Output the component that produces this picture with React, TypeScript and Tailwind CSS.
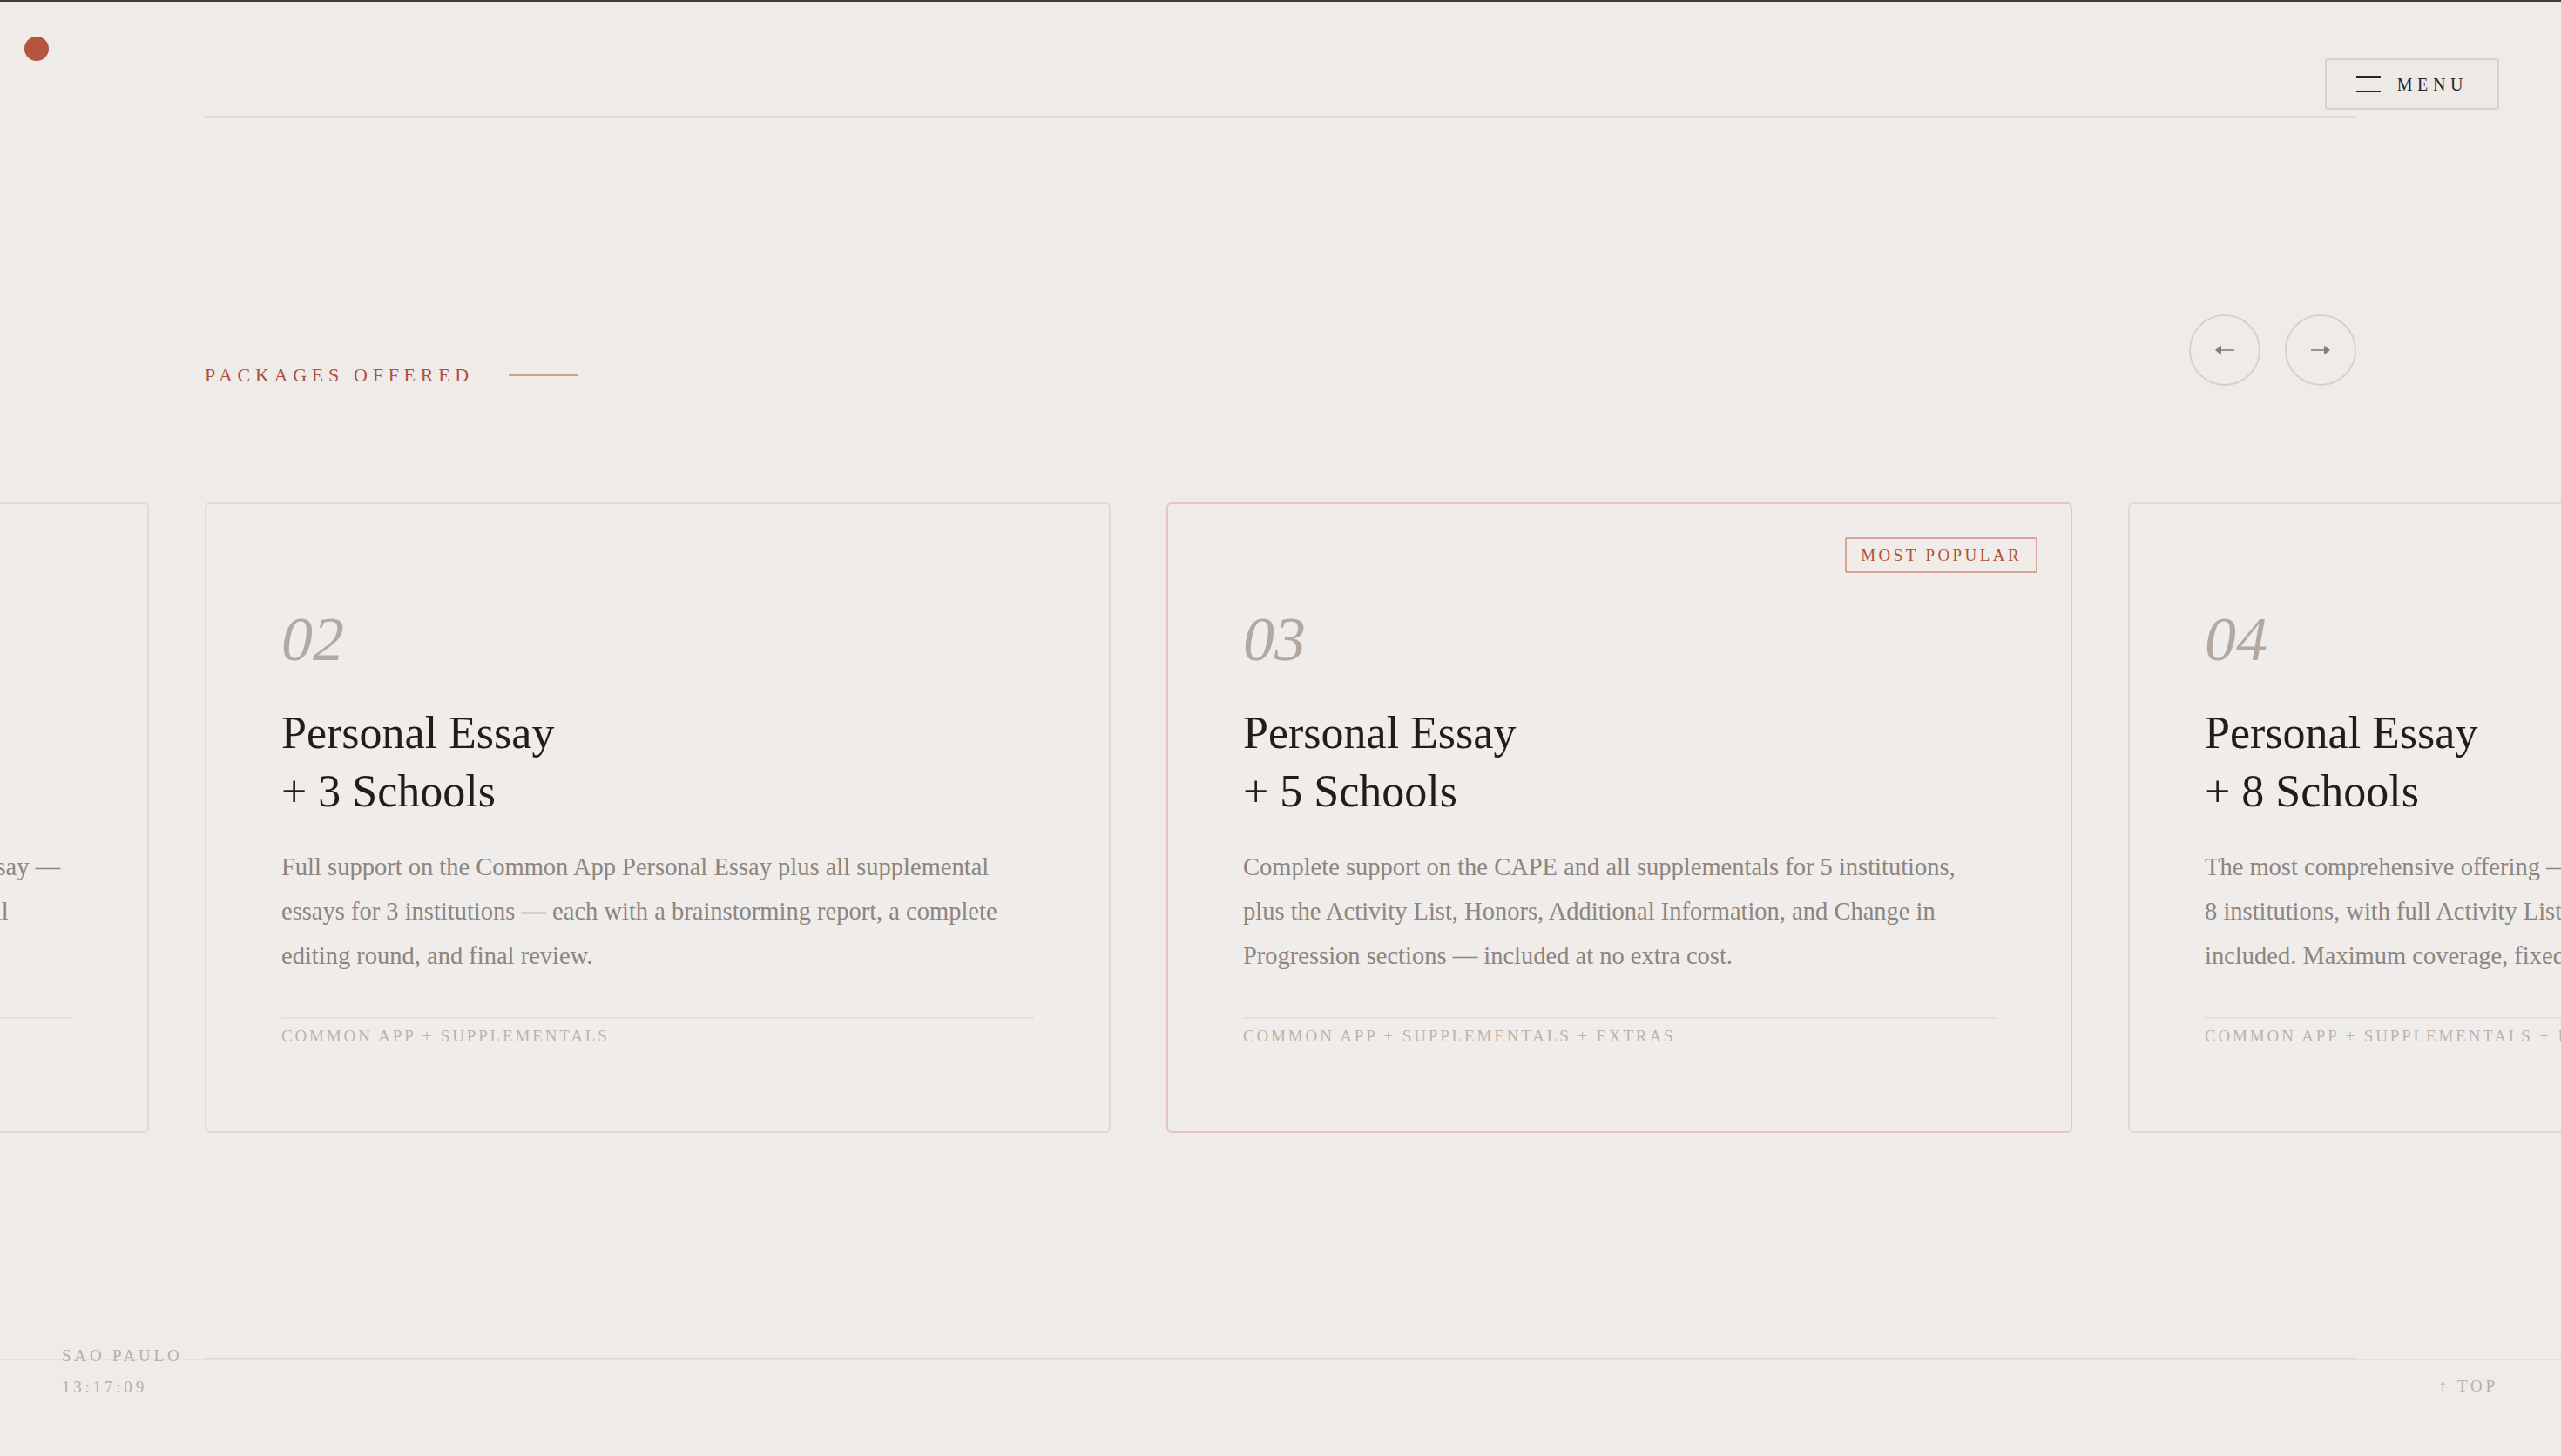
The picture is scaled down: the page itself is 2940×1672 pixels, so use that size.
import React from 'react'

interface Pkg {
  num: string
  title: string
  lines: string[]
  tags: string
  featured?: boolean
}

const packages: Pkg[] = [
  {
    num: '01',
    title: 'Personal Essay|Only',
    lines: [
      'Focused one-on-one guidance through each stage of the Personal Essay —',
      'brainstorming, a complete editing round, and a full final review of all',
      'drafts.',
    ],
    tags: 'COMMON APP',
  },
  {
    num: '02',
    title: 'Personal Essay|+ 3 Schools',
    lines: [
      'Full support on the Common App Personal Essay plus all supplemental',
      'essays for 3 institutions — each with a brainstorming report, a complete',
      'editing round, and final review.',
    ],
    tags: 'COMMON APP + SUPPLEMENTALS',
  },
  {
    num: '03',
    title: 'Personal Essay|+ 5 Schools',
    lines: [
      'Complete support on the CAPE and all supplementals for 5 institutions,',
      'plus the Activity List, Honors, Additional Information, and Change in',
      'Progression sections — included at no extra cost.',
    ],
    tags: 'COMMON APP + SUPPLEMENTALS + EXTRAS',
    featured: true,
  },
  {
    num: '04',
    title: 'Personal Essay|+ 8 Schools',
    lines: [
      'The most comprehensive offering — CAPE and all supplementals for',
      '8 institutions, with full Activity List, Honors, and Additional Information',
      'included. Maximum coverage, fixed price.',
    ],
    tags: 'COMMON APP + SUPPLEMENTALS + EXTRAS',
  },
]

function Arrow({ dir }: { dir: 'left' | 'right' }) {
  return (
    <svg width="24" height="14" viewBox="0 0 24 14" className={dir === 'right' ? 'rotate-180' : ''}>
      <line x1="7" y1="7" x2="23" y2="7" stroke="#857f79" strokeWidth="1.6" />
      <polygon points="1,7 8,1.5 8,12.5" fill="#857f79" />
    </svg>
  )
}

function PackageCard({ pkg }: { pkg: Pkg }) {
  return (
    <div
      className={`relative shrink-0 w-[1040px] h-[724px] rounded-[6px] border-2 bg-[#efece9] px-[86px] pt-[119px] ${
        pkg.featured ? 'border-[#e4c6be]' : 'border-[#dfdad6]'
      }`}
    >
      {pkg.featured && (
        <div className="absolute top-[38px] right-[38px] h-[41px] px-[16px] flex items-center border-2 border-[#d9a497] rounded-[2px] text-[19px] leading-none tracking-[0.18em] text-[#b0503c]">
          MOST POPULAR
        </div>
      )}
      <div className="text-[72px] leading-none italic text-[#b3a9a1]">{pkg.num}</div>
      <h3 className="mt-[38px] text-[52px] leading-[67px] text-[#221d1a]">
        {pkg.title.split('|').map((t) => (
          <span key={t} className="block whitespace-nowrap">
            {t}
          </span>
        ))}
      </h3>
      <p className="mt-[28px] text-[28.5px] leading-[51px] text-[#8c8580]">
        {pkg.lines.map((l) => (
          <span key={l} className="block whitespace-nowrap">
            {l}
          </span>
        ))}
      </p>
      <div className="mt-[45px] h-[2px] bg-[#e3dfdb]" />
      <div className="mt-[10px] text-[19px] leading-none tracking-[0.15em] text-[#bab3ad] whitespace-nowrap">
        {pkg.tags}
      </div>
    </div>
  )
}

export default function App() {
  return (
    <div className="relative h-[1672px] overflow-hidden bg-[#eeebe8] border-t-2 border-[#3b3e41] font-['Liberation_Serif','DejaVu_Serif',serif]">
      {/* brand dot */}
      <div className="absolute left-[28px] top-[40px] w-[28px] h-[28px] rounded-full bg-[#b5553f]" />

      {/* menu */}
      <button className="absolute top-[65px] right-[71px] h-[59px] flex items-center gap-[19px] px-[34px] rounded-[3px] border-2 border-[#d6d1cc] bg-[#ece9e6] text-[#2a2522]">
        <span className="flex flex-col gap-[6.5px]">
          <span className="block w-[28px] h-[1.8px] bg-[#2a2522]" />
          <span className="block w-[28px] h-[1.8px] bg-[#2a2522]" />
          <span className="block w-[28px] h-[1.8px] bg-[#2a2522]" />
        </span>
        <span className="text-[20px] leading-none tracking-[0.28em]">MENU</span>
      </button>

      {/* header line */}
      <header className="mx-[235px] h-[133px] border-b-2 border-[#dedad6]" />

      {/* section heading */}
      <section className="mt-[226px] mx-[235px] flex items-end justify-between">
        <div className="flex items-center gap-[40px] pb-[1px]">
          <span className="text-[22px] leading-none tracking-[0.26em] text-[#b0503c]">PACKAGES OFFERED</span>
          <span className="block w-[80px] h-[2px] bg-[#d99a8c]" />
        </div>
        <div className="flex gap-[28px]">
          <button className="w-[82px] h-[82px] rounded-full border-2 border-[#d6d1cd] flex items-center justify-center">
            <Arrow dir="left" />
          </button>
          <button className="w-[82px] h-[82px] rounded-full border-2 border-[#d6d1cd] flex items-center justify-center">
            <Arrow dir="right" />
          </button>
        </div>
      </section>

      {/* carousel */}
      <div className="mt-[134px] flex gap-[64px] ml-[-869px] w-max">
        {packages.map((p) => (
          <PackageCard key={p.num} pkg={p} />
        ))}
      </div>

      {/* footer lines */}
      <div className="mt-[258px] mx-[235px] h-[2px] bg-[#dcd8d4]" />
      <div className="h-px bg-[#e4e0dd]" />

      {/* footer overlays */}
      <div className="absolute left-[71px] top-[1545px] text-[19px] leading-none tracking-[0.2em] text-[#b5afa9]">
        SAO PAULO
      </div>
      <div className="absolute left-[71px] top-[1581px] text-[19px] leading-none tracking-[0.2em] text-[#b5afa9]">
        13:17:09
      </div>
      <div className="absolute right-[72px] top-[1580px] text-[19px] leading-none tracking-[0.2em] text-[#b5afa9]">
        ↑ TOP
      </div>
    </div>
  )
}
